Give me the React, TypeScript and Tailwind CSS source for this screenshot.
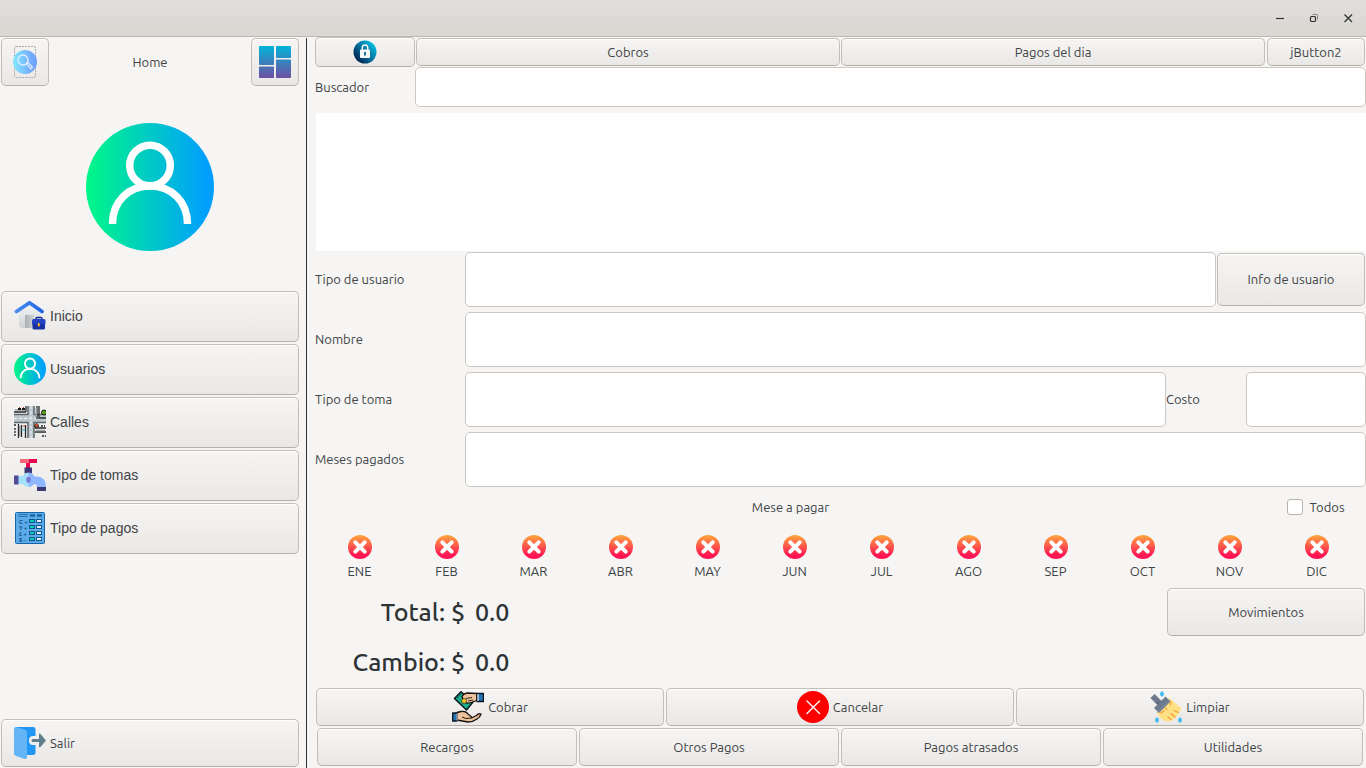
import type { ReactNode } from "react";
import clsx from "clsx";

const MONTHS = ["ENE", "FEB", "MAR", "ABR", "MAY", "JUN", "JUL", "AGO", "SEP", "OCT", "NOV", "DIC"];

function Btn({ className, label, children }: { className?: string; label?: string; children: ReactNode }) {
  return (
    <button
      type="button"
      aria-label={label}
      className={clsx(
        "flex items-center rounded-[5px] border border-[#c4beb8] border-b-[#b5b0aa] bg-linear-to-b from-[#f6f5f4] to-[#eae8e6] shadow-[inset_0_1px_0_#ffffff]",
        className,
      )}
    >
      {children}
    </button>
  );
}

const FIELD = "min-w-0 rounded-[5px] border border-[#cdc7c2] bg-white px-2 outline-none";
const FIELD_LABEL = "w-[150px] shrink-0 pb-px";

function SearchIcon() {
  return (
    <svg width="24" height="32" viewBox="0 0 24 32">
      <defs>
        <linearGradient id="search-g">
          <stop offset="0" stopColor="#84e9fd" />
          <stop offset="0.7" stopColor="#74b0fd" />
          <stop offset="1" stopColor="#6d9cfa" />
        </linearGradient>
      </defs>
      <rect x="1.5" y="0.5" width="21" height="31" rx="1.5" fill="none" stroke="#a9a9a9" strokeDasharray="2 1" />
      <circle cx="12" cy="16" r="12" fill="url(#search-g)" />
      <circle cx="10" cy="14" r="5" fill="none" stroke="#e3efff" strokeWidth="1.3" />
      <path d="M13.5 17.5l1.2-1.2 4.8 5-1.6 1.6-4.4-5.4z" fill="none" stroke="#e3efff" strokeWidth="1.1" />
    </svg>
  );
}

function DashboardIcon() {
  return (
    <svg width="32" height="32" viewBox="0 0 32 32">
      <defs>
        <linearGradient id="dash-g" gradientUnits="userSpaceOnUse" x1="0" y1="0" x2="0" y2="32">
          <stop offset="0" stopColor="#00b4d9" />
          <stop offset="1" stopColor="#714fa2" />
        </linearGradient>
      </defs>
      <g fill="url(#dash-g)">
        <rect width="15" height="19" rx="0.7" />
        <rect y="20.5" width="15" height="11.5" rx="0.7" />
        <rect x="17" width="15" height="12" rx="0.7" />
        <rect x="17" y="13.5" width="15" height="18.5" rx="0.7" />
      </g>
    </svg>
  );
}

function UserIcon({ size, id }: { size: number; id: string }) {
  return (
    <svg width={size} height={size} viewBox="0 0 128 128">
      <defs>
        <linearGradient id={id}>
          <stop offset="0" stopColor="#00f78a" />
          <stop offset="0.05" stopColor="#00f38d" />
          <stop offset="0.96" stopColor="#009eff" />
          <stop offset="1" stopColor="#009eff" />
        </linearGradient>
      </defs>
      <circle cx="64" cy="64" r="64" fill={`url(#${id})`} />
      <circle cx="64" cy="42.5" r="20.3" fill="none" stroke="#fff" strokeWidth="7.5" />
      <path d="M26.5 101C26.5 78 43 63 64 63s37.500 15 37.500 38" fill="none" stroke="#fff" strokeWidth="7.500" />
    </svg>
  );
}

function HomeIcon() {
  return (
    <svg width="32" height="32" viewBox="0 0 32 32">
      <defs>
        <linearGradient id="home-w" x1="0" y1="0" x2="0" y2="1">
          <stop offset="0" stopColor="#f3f5f6" />
          <stop offset="1" stopColor="#cfd3d5" />
        </linearGradient>
        <linearGradient id="home-r" gradientUnits="userSpaceOnUse" x1="0" y1="0" x2="30" y2="0">
          <stop offset="0" stopColor="#4a90ee" />
          <stop offset="1" stopColor="#1f62e6" />
        </linearGradient>
        <linearGradient id="home-d">
          <stop offset="0" stopColor="#a9adaf" />
          <stop offset="1" stopColor="#d3d6d7" />
        </linearGradient>
      </defs>
      <path d="M5 12L15.500 4 26 12v16H9q-4 0-4-4z" fill="url(#home-w)" />
      <rect x="11" y="15" width="9" height="13" fill="url(#home-d)" />
      <path d="M2.500 11.500L15.500 2.700 28 11.500" fill="none" stroke="url(#home-r)" strokeWidth="3.700" strokeLinecap="round" strokeLinejoin="round" />
      <path d="M22 19.500v-1q0-1 1-1h4q1 0 1 1v1" fill="none" stroke="#142a93" strokeWidth="1.400" />
      <rect x="18" y="19" width="13.500" height="6" rx="1.500" fill="#2443c4" />
      <path d="M18.500 24h12.500v4q0 1.500-1.500 1.500H20q-1.500 0-1.500-1.500z" fill="#1830a3" />
      <rect x="23.800" y="23" width="2" height="3.500" rx="0.900" fill="#fdbb16" />
    </svg>
  );
}

function StreetsIcon() {
  return (
    <svg width="32" height="32" viewBox="0 0 32 32">
      <path d="M0 9h14V0h6v9h12v7H20v16h-6V16H0z" fill="#bcc8ce" />
      <path d="M0 8.500h14V0M20 0v8.500h12M0 16.500h14V32M20 32V16.500h12" fill="none" stroke="#5d686e" strokeWidth="1.500" />
      <path d="M0 12.500h32M17 0v32" stroke="#f2f6f8" strokeWidth="0.900" strokeDasharray="3 2" />
      <path d="M0 6h12M12 0v6M23 0v13M25 0v12h7M4.500 18v14M7.500 19v12M11.500 19v13M21 22h11M21 26h11" fill="none" stroke="#25292b" strokeWidth="1.300" />
      <path d="M1 4h10M22.300 2v9M5.800 20v10M22 24.500h9" stroke="#969fa4" strokeWidth="1.500" />
      <path d="M4 3h3M8 3h3" stroke="#151515" strokeWidth="2" />
      <path d="M5 1.500h1M9 1.500h1M9 20h2" stroke="#ce4532" strokeWidth="1.200" />
      <path d="M9 24h2" stroke="#5ecce0" strokeWidth="2" />
      <circle cx="30" cy="6.500" r="2.500" fill="#5b9d16" stroke="#1a1f18" />
      <path d="M20.500 21v-2l2-1.500 2 1.500v2z" fill="#df5034" stroke="#271e1b" strokeWidth="0.800" />
      <path d="M27 20h4M28 30h4M0 19h3M1 22v8" stroke="#202426" strokeWidth="1.300" strokeDasharray="2 1" />
    </svg>
  );
}

function TapIcon() {
  return (
    <svg width="32" height="32" viewBox="0 0 32 32">
      <path d="M6 0h9v4H6z" fill="#ff6576" />
      <path d="M15 0h8v4H15zM12 4h4v5h-4z" fill="#e7044e" />
      <path d="M10.500 8.500h7.500v6h-7.500z" fill="#3d3774" />
      <path d="M4 17h5q2-3.500 5.500-3.500V28Q11 28 8.500 25H4z" fill="#a2e0fb" />
      <path d="M14.500 13.500q4 0 6 4h2.500q9 0 9 10.500h-9q0-3-3-3Q18 28 14.500 28z" fill="#8eb7ff" />
      <path d="M0 16.500h4.500v9H0z" fill="#544c98" />
      <ellipse cx="14.500" cy="20.700" rx="2.200" ry="3" fill="#7777d4" />
      <path d="M23 28h9v4h-9z" fill="#3d3774" />
    </svg>
  );
}

function PaymentsIcon() {
  const rows = [7.5, 13.5, 19.5, 25.5];
  const signs = ["C +", "Y +", "£ +", "$ -"];
  return (
    <svg width="32" height="32" viewBox="0 0 32 32">
      <rect x="1.500" y="0.500" width="29" height="31" rx="1" fill="#5cabe8" stroke="#1766a7" />
      <path d="M4.500 3.500h9M16 3.500h5M23 3.500h5" stroke="#1766a7" strokeWidth="2.600" />
      <path d="M5 3.500h8" stroke="#79bff0" strokeWidth="0.700" />
      {rows.map((y, i) => (
        <g key={y}>
          <text x="5" y={y + 4} fontSize="5.500" fontWeight="bold" fontFamily="Liberation Sans, sans-serif" fill="#0e4f86">
            {signs[i]}
          </text>
          <rect x="15.500" y={y} width="5" height="3" fill="#04cfae" stroke="#10568f" />
          <rect x="22.500" y={y} width="5" height="3" fill="#e1eefa" stroke="#10568f" />
        </g>
      ))}
    </svg>
  );
}

function ExitIcon() {
  return (
    <svg width="32" height="32" viewBox="0 0 32 32">
      <path d="M2 0h17q2.500 0 2.500 2.500V9h-2.500q-4 0-4 4.500t4 4.500h2.500v8q0 2-2.500 2H11L2 1z" fill="#2196f3" />
      <path d="M2 0l9 2.700q2 0.600 2 2.500v25q0 2-2.300 1.700L2 29q-2-0.700-2-2.500V2q0-2 2-2z" fill="#64b5f6" />
      <path d="M19 12h6V7.500q0-1.500 1.500-0.500l5.500 6.500-5.500 6.500q-1.500 1-1.500-0.500V15h-6q-1.500 0-1.500-1.500T19 12z" fill="#607d8b" />
    </svg>
  );
}

function LockIcon() {
  return (
    <svg width="24" height="24" viewBox="0 0 24 24">
      <defs>
        <linearGradient id="lock-g" x1="0.100" y1="0.850" x2="0.900" y2="0.150">
          <stop offset="0" stopColor="#011d4d" />
          <stop offset="0.500" stopColor="#03709b" />
          <stop offset="1" stopColor="#06bee3" />
        </linearGradient>
      </defs>
      <circle cx="12" cy="12" r="11.500" fill="url(#lock-g)" />
      <path d="M9.300 10V7.700a2.700 2.700 0 0 1 5.400 0V10" fill="none" stroke="#f3f7f8" strokeWidth="1.500" />
      <rect x="7" y="9.500" width="10" height="8.500" rx="0.800" fill="#f3f7f8" />
      <path d="M12 12v3.500" stroke="#0d638d" strokeWidth="1.800" />
    </svg>
  );
}

function MonthIcon() {
  return (
    <svg width="24" height="24" viewBox="0 0 24 24">
      <defs>
        <linearGradient id="month-g" x1="0" y1="0" x2="0" y2="1">
          <stop offset="0" stopColor="#fea73f" />
          <stop offset="0.850" stopColor="#ff1553" />
          <stop offset="1" stopColor="#ff1553" />
        </linearGradient>
      </defs>
      <circle cx="12" cy="12" r="12" fill="url(#month-g)" />
      <path d="M7.300 7.300l9.400 9.400M16.700 7.300l-9.400 9.400" stroke="#fff" strokeWidth="4" strokeLinecap="round" />
    </svg>
  );
}

function PayIcon() {
  return (
    <svg width="32" height="32" viewBox="0 0 32 32" strokeLinejoin="round">
      <path d="M2.500 7.500L9 0.700 21 11 14.500 19z" fill="#19ac8d" stroke="#08171a" strokeWidth="1.500" />
      <path d="M5 7l5-4.500 8 7.500" fill="none" stroke="#0b4740" strokeWidth="1" strokeDasharray="2 1" />
      <path d="M10 5.500q2-3.500 6-3.500l9 0.500v7l-6 2q-4 1.500-6-0.500l-1-2q-1.500-1-2-3.500z" fill="#eec29b" stroke="#15110f" strokeWidth="1.300" />
      <circle cx="12" cy="10" r="2.500" fill="#f6c22b" stroke="#1a1508" strokeWidth="0.600" />
      <path d="M14 7.500l6-1M16 10l5-1" stroke="#1a1310" strokeWidth="0.900" />
      <path d="M25 2.500h6.500v8H25z" fill="#2573b5" stroke="#07121c" strokeWidth="1.300" />
      <path d="M26 3v7" stroke="#d8e4ea" strokeWidth="1.300" />
      <path d="M5 21.500l4-1q5-0.800 7.500 3l2 1.500q1.500 1 1 2l5-2.500q2-2.500 4.500-1.500-1 3.500-4 5-4 3-9 3L5 29z" fill="#eec29b" stroke="#15110f" strokeWidth="1.300" />
      <path d="M10 26q3 2.500 9 1" fill="none" stroke="#1a1310" strokeWidth="1" />
      <path d="M0.700 22H5v8H0.700z" fill="#2573b5" stroke="#07121c" strokeWidth="1.300" />
      <path d="M5 22.500v7" stroke="#d8e4ea" strokeWidth="1" />
    </svg>
  );
}

function CancelIcon() {
  return (
    <svg width="32" height="32" viewBox="0 0 32 32">
      <circle cx="16" cy="16" r="16" fill="#fe0000" />
      <path d="M10 10l12.500 12.500M22.500 10L10 22.500" stroke="#fff" strokeWidth="1.400" strokeLinecap="round" />
    </svg>
  );
}

function CleanIcon() {
  return (
    <svg width="32" height="32" viewBox="0 0 32 32">
      <path d="M19.500 7q6 6 12 10-2 5-6.500 10.500Q21 31 15 30q-5-2-8.500-9z" fill="#ffe185" />
      <path d="M18 26l3 2.500M21 22.500l4 3.500M24 19.500l4.500 2M11 22l3-2M20 14l1-3M15.500 17.500l1.500 1" fill="none" stroke="#f59b33" strokeWidth="1.200" strokeLinecap="round" />
      <path d="M2.500 5l9 9" stroke="#6d7a8d" strokeWidth="6" />
      <path d="M6 11.500l4 4L14 10" fill="#57657a" />
      <path d="M6.500 19.500L18 8" stroke="#6d7a8d" strokeWidth="7" />
      <path d="M7.500 21.500L20 9" stroke="#8491a0" strokeWidth="1" />
      <path d="M12 0q4 3 0 6-4-3 0-6zM7 26q4 3 0 6-4-3 0-6zM30 26q4 3 0 6-4-3 0-6z" fill="#3fbced" />
    </svg>
  );
}

const NAV: [string, ReactNode][] = [
  ["Inicio", <HomeIcon />],
  ["Usuarios", <UserIcon size={32} id="user-small" />],
  ["Calles", <StreetsIcon />],
  ["Tipo de tomas", <TapIcon />],
  ["Tipo de pagos", <PaymentsIcon />],
];

function Sidebar() {
  return (
    <aside className="flex w-[300px] shrink-0 flex-col px-px pt-px pb-px">
      <header className="flex items-center justify-between">
        <Btn label="Buscar" className="size-12 justify-center"><SearchIcon /></Btn>
        <span>Home</span>
        <Btn label="Panel" className="size-12 justify-center"><DashboardIcon /></Btn>
      </header>
      <div className="mt-[37px] mb-10 flex justify-center">
        <UserIcon size={128} id="user-large" />
      </div>
      <nav className="flex flex-col gap-0.5 font-['Liberation_Sans',Arial,sans-serif] text-[14px]">
        {NAV.map(([name, icon]) => (
          <Btn key={name} className="h-[51px] gap-1 px-3 pb-px">{icon}{name}</Btn>
        ))}
      </nav>
      <Btn className="mt-auto h-12 gap-1 px-3"><ExitIcon />Salir</Btn>
    </aside>
  );
}

function Amount({ name, value }: { name: string; value: string }) {
  return (
    <p className="flex gap-2.5 text-[25px] leading-8 font-medium text-[#2e3436]">
      <span className="w-[150px] text-right whitespace-nowrap">{name}: $</span>
      <span>{value}</span>
    </p>
  );
}

function Main() {
  return (
    <main className="flex min-w-0 flex-1 flex-col">
      <div className="flex h-[30px] gap-px">
        <Btn label="Bloquear" className="w-[100px] shrink-0 justify-center"><LockIcon /></Btn>
        <Btn className="my-px flex-1 justify-center">Cobros</Btn>
        <Btn className="my-px flex-1 justify-center">Pagos del dia</Btn>
        <Btn className="m-px w-[98px] shrink-0 justify-center">jButton2</Btn>
      </div>
      <div className="flex h-10 items-center">
        <label htmlFor="buscador" className="w-[100px] shrink-0">Buscador</label>
        <input id="buscador" className={clsx(FIELD, "h-10 flex-1")} />
      </div>
      <section aria-label="Resultados" className="mt-1.5 ml-px h-[138px] bg-white" />

      <div className="mt-px flex flex-col gap-[5px]">
        <div className="flex items-center">
          <label htmlFor="tipo-usuario" className={FIELD_LABEL}>Tipo de usuario</label>
          <input id="tipo-usuario" className={clsx(FIELD, "h-[55px] flex-1")} />
          <Btn className="mx-px h-[53px] w-[148px] shrink-0 justify-center pb-px">Info de usuario</Btn>
        </div>
        <div className="flex items-center">
          <label htmlFor="nombre" className={FIELD_LABEL}>Nombre</label>
          <input id="nombre" className={clsx(FIELD, "h-[55px] flex-1")} />
        </div>
        <div className="flex items-center">
          <label htmlFor="tipo-toma" className={FIELD_LABEL}>Tipo de toma</label>
          <input id="tipo-toma" className={clsx(FIELD, "h-[55px] flex-1")} />
          <label htmlFor="costo" className="w-20 shrink-0 pb-px">Costo</label>
          <input id="costo" className={clsx(FIELD, "h-[55px] w-[120px]")} />
        </div>
        <div className="flex items-center">
          <label htmlFor="meses-pagados" className={FIELD_LABEL}>Meses pagados</label>
          <input id="meses-pagados" className={clsx(FIELD, "h-[55px] flex-1")} />
        </div>
      </div>

      <div className="flex h-10 items-center">
        <span className="flex-1 text-center">Mese a pagar</span>
        <label className="flex w-[100px] items-center justify-center gap-1.5">
          <input type="checkbox" className="size-4 appearance-none rounded-[3px] border border-[#b8b2ac] bg-white" />
          Todos
        </label>
      </div>

      <div className="grid grid-cols-12 pt-2 pr-1.5 pl-px">
        {MONTHS.map((m) => (
          <button key={m} type="button" className="flex flex-col items-center gap-1">
            <MonthIcon />
            <span className="leading-4">{m}</span>
          </button>
        ))}
      </div>

      <div className="mt-2 flex h-[50px] items-center justify-between">
        <Amount name="Total" value="0.0" />
        <Btn className="mr-px h-12 w-[198px] justify-center">Movimientos</Btn>
      </div>
      <div className="flex h-[50px] items-center">
        <Amount name="Cambio" value="0.0" />
      </div>

      <div className="mt-px flex flex-col gap-0.5 pb-px">
        <div className="grid grid-cols-3 gap-0.5 pr-0.5 pl-px">
          <Btn className="h-[38px] justify-center gap-1"><PayIcon />Cobrar</Btn>
          <Btn className="h-[38px] justify-center gap-1"><CancelIcon />Cancelar</Btn>
          <Btn className="h-[38px] justify-center gap-1"><CleanIcon />Limpiar</Btn>
        </div>
        <div className="grid grid-cols-4 gap-0.5 pr-[3px] pl-0.5">
          {["Recargos", "Otros Pagos", "Pagos atrasados", "Utilidades"].map((name) => (
            <Btn key={name} className="h-[38px] justify-center">{name}</Btn>
          ))}
        </div>
      </div>
    </main>
  );
}

function TitleBar() {
  return (
    <header className="flex h-[37px] shrink-0 items-center justify-end gap-[18px] border-b border-[#bfb8b1] bg-linear-to-b from-[#e1dedb] to-[#dad6d2] pr-2.5 text-[#2e3436]">
      <button type="button" aria-label="Minimizar">
        <svg width="16" height="16" viewBox="0 0 16 16"><path d="M4 8.500h8" stroke="currentColor" strokeWidth="1.200" /></svg>
      </button>
      <button type="button" aria-label="Restaurar">
        <svg width="16" height="16" viewBox="0 0 16 16" fill="none" stroke="currentColor">
          <rect x="4.500" y="6.500" width="5" height="5" rx="1" strokeWidth="1.200" />
          <path d="M6.500 4.500h4q1 0 1 1v4" opacity="0.500" />
        </svg>
      </button>
      <button type="button" aria-label="Cerrar">
        <svg width="16" height="16" viewBox="0 0 16 16"><path d="M4.500 4.500l7.500 7.500M12 4.500L4.500 12" stroke="currentColor" strokeWidth="1.300" /></svg>
      </button>
    </header>
  );
}

export default function App() {
  return (
    <div className="flex min-h-screen flex-col bg-[#f6f5f4] font-[Ubuntu,'Noto_Sans',sans-serif] text-[13px] leading-5 text-[#3f4446]">
      <TitleBar />
      <div className="flex flex-1">
        <Sidebar />
        <div className="mt-px mr-2 ml-1.5 w-px bg-[#2e3436]" />
        <Main />
      </div>
    </div>
  );
}
